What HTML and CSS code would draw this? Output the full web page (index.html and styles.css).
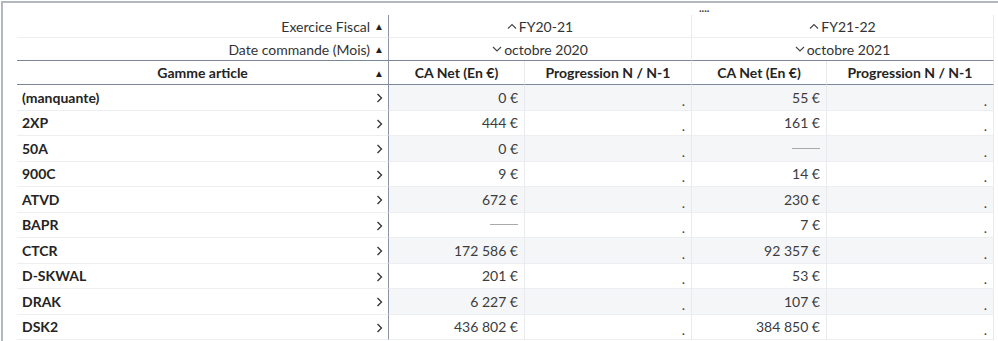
FILE: index.html
```html
<!DOCTYPE html>
<html lang="fr">
<head>
<meta charset="utf-8">
<link rel="stylesheet" href="styles.css">
</head>
<body>
<div class="frame">
  <div class="topbar"><span class="dots">....</span></div>
  <div class="grid">
    <div class="c rowhead">Exercice Fiscal <span class="tri">▲</span></div>
    <div class="c group span2"><svg class="chev" viewBox="0 0 10 6"><path d="M1 5.5 L5 1.5 L9 5.5" /></svg>FY20-21</div>
    <div class="c group span2 last"><svg class="chev" viewBox="0 0 10 6"><path d="M1 5.5 L5 1.5 L9 5.5" /></svg>FY21-22</div>

    <div class="c rowhead dark">Date commande (Mois) <span class="tri">▲</span></div>
    <div class="c group span2 dark"><svg class="chev" viewBox="0 0 10 6"><path d="M1 1 L5 5 L9 1" /></svg>octobre 2020</div>
    <div class="c group span2 last dark"><svg class="chev" viewBox="0 0 10 6"><path d="M1 1 L5 5 L9 1" /></svg>octobre 2021</div>

    <div class="c colhead dark"><span class="colname">Gamme article</span><span class="tri">▲</span></div>
    <div class="c measure dark">CA Net (En €)</div>
    <div class="c measure dark">Progression N / N-1</div>
    <div class="c measure dark">CA Net (En €)</div>
    <div class="c measure dark last">Progression N / N-1</div>

    <div class="c name">(manquante)<svg class="arrow" viewBox="0 0 7 10"><path d="M1.5 1 L5.5 5 L1.5 9" /></svg></div>
    <div class="c val odd">0 €</div><div class="c val odd dot">.</div><div class="c val odd">55 €</div><div class="c val odd dot last">.</div>

    <div class="c name">2XP<svg class="arrow" viewBox="0 0 7 10"><path d="M1.5 1 L5.5 5 L1.5 9" /></svg></div>
    <div class="c val">444 €</div><div class="c val dot">.</div><div class="c val">161 €</div><div class="c val dot last">.</div>

    <div class="c name">50A<svg class="arrow" viewBox="0 0 7 10"><path d="M1.5 1 L5.5 5 L1.5 9" /></svg></div>
    <div class="c val odd">0 €</div><div class="c val odd dot">.</div><div class="c val odd"><span class="blank"></span></div><div class="c val odd dot last">.</div>

    <div class="c name">900C<svg class="arrow" viewBox="0 0 7 10"><path d="M1.5 1 L5.5 5 L1.5 9" /></svg></div>
    <div class="c val">9 €</div><div class="c val dot">.</div><div class="c val">14 €</div><div class="c val dot last">.</div>

    <div class="c name">ATVD<svg class="arrow" viewBox="0 0 7 10"><path d="M1.5 1 L5.5 5 L1.5 9" /></svg></div>
    <div class="c val odd">672 €</div><div class="c val odd dot">.</div><div class="c val odd">230 €</div><div class="c val odd dot last">.</div>

    <div class="c name">BAPR<svg class="arrow" viewBox="0 0 7 10"><path d="M1.5 1 L5.5 5 L1.5 9" /></svg></div>
    <div class="c val"><span class="blank"></span></div><div class="c val dot">.</div><div class="c val">7 €</div><div class="c val dot last">.</div>

    <div class="c name">CTCR<svg class="arrow" viewBox="0 0 7 10"><path d="M1.5 1 L5.5 5 L1.5 9" /></svg></div>
    <div class="c val odd">172 586 €</div><div class="c val odd dot">.</div><div class="c val odd">92 357 €</div><div class="c val odd dot last">.</div>

    <div class="c name">D-SKWAL<svg class="arrow" viewBox="0 0 7 10"><path d="M1.5 1 L5.5 5 L1.5 9" /></svg></div>
    <div class="c val">201 €</div><div class="c val dot">.</div><div class="c val">53 €</div><div class="c val dot last">.</div>

    <div class="c name">DRAK<svg class="arrow" viewBox="0 0 7 10"><path d="M1.5 1 L5.5 5 L1.5 9" /></svg></div>
    <div class="c val odd">6 227 €</div><div class="c val odd dot">.</div><div class="c val odd">107 €</div><div class="c val odd dot last">.</div>

    <div class="c name">DSK2<svg class="arrow" viewBox="0 0 7 10"><path d="M1.5 1 L5.5 5 L1.5 9" /></svg></div>
    <div class="c val">436 802 €</div><div class="c val dot">.</div><div class="c val">384 850 €</div><div class="c val dot last">.</div>
  </div>
</div>
</body>
</html>
```

FILE: styles.css
```css
html, body {
  margin: 0;
  padding: 0;
  background: #ffffff;
  overflow: hidden;
}

body {
  font-family: Lato, "Open Sans", "Liberation Sans", sans-serif;
  font-size: 14px;
  color: #252423;
}

.frame {
  margin: 1px 0 0 1px;
  border-top: 2px solid #b3b7bf;
  border-left: 2px solid #b3b7bf;
  padding-left: 14px;
  height: 400px;
}

.topbar {
  height: 12px;
  display: flex;
  align-items: flex-start;
  padding-left: 682px;
}

.dots {
  display: block;
  font-size: 11px;
  line-height: 10px;
  letter-spacing: 0px;
  color: #444;
  font-weight: 700;
}

.grid {
  display: grid;
  grid-template-columns: 372px 136px 167px 135px 167px;
  grid-template-rows: 23px 23px 24px repeat(10, 25.5px);
  width: 977px;
}

.c {
  box-sizing: border-box;
  display: flex;
  align-items: center;
  border-bottom: 1px solid #eceef1;
  white-space: nowrap;
}

.dark {
  border-bottom-color: #7b879b;
}

.span2 {
  grid-column: span 2;
}

.rowhead {
  justify-content: flex-end;
  padding-right: 4px;
  border-right: 1px solid #8a94a5;
  color: #333;
}

.tri {
  font-size: 10px;
  margin-left: 4px;
  color: #222;
}

.group {
  justify-content: center;
  border-right: 1px solid #e8eaee;
  color: #333;
}

.chev {
  width: 10px;
  height: 6px;
  margin-right: 2px;
  fill: none;
  stroke: #444;
  stroke-width: 1.1;
}

.colhead {
  border-right: 1px solid #8a94a5;
  padding-right: 4px;
  font-weight: 700;
  color: #252423;
}

.colname {
  flex: 1;
  text-align: center;
  padding-left: 18px;
}

.measure {
  justify-content: center;
  font-weight: 700;
  border-right: 1px solid #e8eaee;
}

.name {
  justify-content: space-between;
  padding-left: 5px;
  padding-right: 5px;
  font-weight: 700;
  border-right: 1px solid #8a94a5;
  color: #252423;
}

.arrow {
  width: 7px;
  height: 10px;
  margin-top: 2px;
  fill: none;
  stroke: #333;
  stroke-width: 1.3;
}

.val {
  justify-content: flex-end;
  padding-right: 6px;
  border-right: 1px solid #e8eaee;
  color: #3c3c3c;
}

.odd {
  background: #f5f6f8;
}

.dot {
  padding-right: 6px;
  align-items: flex-end;
  padding-bottom: 3px;
  line-height: 13px;
}

.blank {
  display: block;
  width: 28px;
  border-top: 1px solid #a9a9a9;
}
```
